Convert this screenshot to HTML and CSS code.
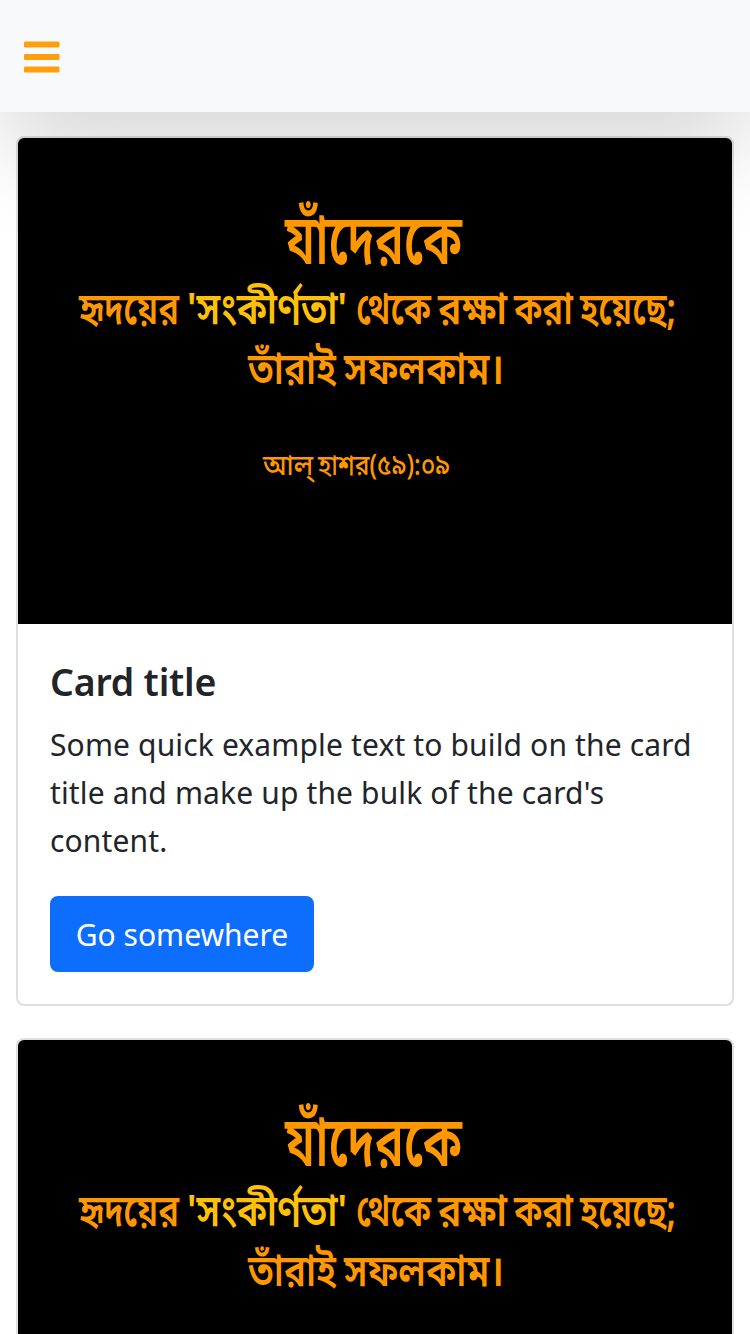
FILE: index.html
```
<!DOCTYPE html>
<html lang="en">
<head>
<meta charset="utf-8">
<title>Cards</title>
<link rel="stylesheet" href="styles.css">
</head>
<body>
<nav class="navbar">
  <svg class="menu-icon" viewBox="0 0 36 32" aria-label="Menu">
    <rect x="0" y="0.5" width="35.5" height="6" rx="1.3"/>
    <rect x="0" y="13" width="35.5" height="6" rx="1.3"/>
    <rect x="0" y="25.5" width="35.5" height="6" rx="1.3"/>
  </svg>
</nav>
<main class="cards">
  <article class="card">
    <svg class="poster" viewBox="0 0 714 486" lang="bn">
      <defs>
        <g id="verse">
          <text class="verse-xl" x="267" y="126" textLength="177" lengthAdjust="spacingAndGlyphs">যাঁদেরকে</text>
          <text class="verse" x="61" y="186" textLength="100" lengthAdjust="spacingAndGlyphs">হৃদয়ের</text>
          <text class="verse accent" x="169" y="186" textLength="160" lengthAdjust="spacingAndGlyphs">'সংকীর্ণতা'</text>
          <text class="verse" x="338" y="186" textLength="75" lengthAdjust="spacingAndGlyphs">থেকে</text>
          <text class="verse" x="420" y="186" textLength="69" lengthAdjust="spacingAndGlyphs">রক্ষা</text>
          <text class="verse" x="496" y="186" textLength="59" lengthAdjust="spacingAndGlyphs">করা</text>
          <text class="verse" x="562" y="186" textLength="96" lengthAdjust="spacingAndGlyphs">হয়েছে;</text>
          <text class="verse" x="230" y="246" textLength="88" lengthAdjust="spacingAndGlyphs">তাঁরাই</text>
          <text class="verse" x="326" y="246" textLength="160" lengthAdjust="spacingAndGlyphs">সফলকাম।</text>
          <text class="verse-sm" x="245" y="337" textLength="50" lengthAdjust="spacingAndGlyphs">আল্</text>
          <text class="verse-sm" x="300" y="337" textLength="132" lengthAdjust="spacingAndGlyphs">হাশর(৫৯):০৯</text>
        </g>
      </defs>
      <use href="#verse"/>
    </svg>
    <div class="card-body">
      <h5 class="card-title">Card title</h5>
      <p class="card-text">Some quick example text to build on the card title and make up the bulk of the card's content.</p>
      <a class="btn">Go somewhere</a>
    </div>
  </article>
  <article class="card">
    <svg class="poster" viewBox="0 0 714 486" lang="bn"><use href="#verse"/></svg>
  </article>
</main>
</body>
</html>
```
FILE: styles.css
```
* { box-sizing: border-box; }
html { height: 100%; overflow: hidden; }
body {
  margin: 0;
  height: 100%;
  overflow: hidden;
  background: #fff;
  color: #212529;
  font: 30px/48px "Noto Sans", "Open Sans", sans-serif;
}
.navbar {
  position: relative;
  z-index: 1;
  display: flex;
  align-items: center;
  height: 112px;
  padding: 2px 24px 0;
  background: #f8f9fb;
  box-shadow: 0 32px 96px rgba(0, 0, 0, .175);
}
.menu-icon { width: 36px; height: 32px; fill: #ff9f0d; }
.cards {
  display: flex;
  flex-direction: column;
  gap: 32px;
  height: 1222px;
  overflow: hidden;
  padding: 24px 16px 0;
}
.card {
  flex: none;
  overflow: hidden;
  border: 2px solid #dfdfdf;
  border-radius: 8px;
  background: #fff;
}
.poster { display: block; width: 714px; height: 486px; background: #000; }
.verse, .verse-xl, .verse-sm {
  font-family: "Noto Sans Bengali", "Noto Sans", sans-serif;
  font-weight: 600;
  font-size: 44px;
  fill: #ff9800;
}
.verse-xl { font-size: 70px; }
.verse-sm { font-size: 28px; font-weight: 500; }
.accent { fill: #ffc107; }
.card-body { padding: 32px; }
.card-title { margin: 2px 0 15px; font-size: 37.5px; line-height: 48px; font-weight: 600; letter-spacing: -.2px; }
.card-text { margin: 0 0 31px; font-weight: 370; letter-spacing: .14px; }
.btn {
  display: flex;
  align-items: center;
  justify-content: center;
  width: 264px;
  height: 76px;
  padding-top: 2px;
  border-radius: 8px;
  background: #0d6efd;
  color: #fff;
}
```
